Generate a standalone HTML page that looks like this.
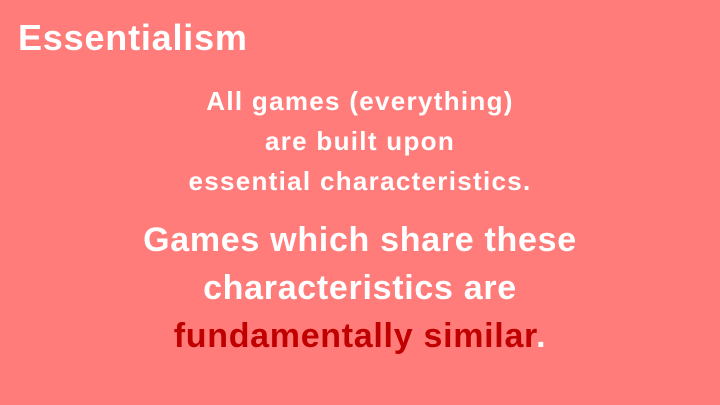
<!DOCTYPE html>
<html><head><style>
html,body{margin:0;padding:0}
body{width:720px;height:405px;background:#FF7C7A;position:relative;overflow:hidden;font-family:"Liberation Sans",Arial,sans-serif;font-weight:bold;color:#fff}
.l{position:absolute;left:0;width:720px;text-align:center;white-space:nowrap}
.s{font-size:26px;line-height:30px;letter-spacing:1.3px}
.b{font-size:34px;line-height:40px;letter-spacing:0.7px}
.r{color:#C00000}
</style></head><body>
<div style="position:absolute;left:18px;top:17px;font-size:36px;line-height:42px;letter-spacing:0.8px;white-space:nowrap">Essentialism</div>
<div class="l s" style="top:86px">All games (everything)</div>
<div class="l s" style="top:126px">are built upon</div>
<div class="l s" style="top:166px">essential characteristics.</div>
<div class="l b" style="top:220px">Games which share these</div>
<div class="l b" style="top:268px">characteristics are</div>
<div class="l b" style="top:316px"><span class="r">fundamentally similar</span>.</div>
</body></html>
